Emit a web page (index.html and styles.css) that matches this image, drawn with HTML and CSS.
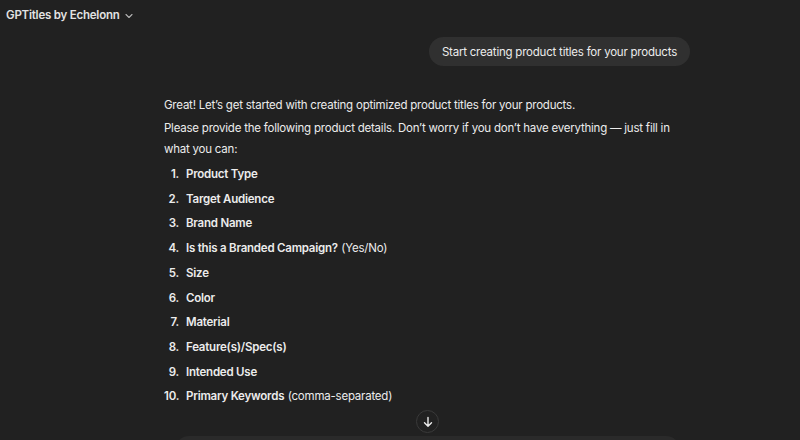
FILE: index.html
```html
<!DOCTYPE html>
<html>
<head>
<meta charset="utf-8">
<link rel="stylesheet" href="styles.css">
</head>
<body>
<div class="app">
  <header class="topbar">
    <span class="title">GPTitles by Echelonn</span>
    <svg class="chev" width="10" height="10" viewBox="0 0 10 10"><path d="M2 3.5 L5 6.5 L8 3.5" fill="none" stroke="#b4b4b4" stroke-width="1.1" stroke-linecap="round" stroke-linejoin="round"/></svg>
  </header>
  <main class="thread">
    <div class="user-row">
      <div class="bubble">Start creating product titles for your products</div>
    </div>
    <div class="assistant">
      <p class="p1">Great! Let’s get started with creating optimized product titles for your products.</p>
      <p class="p2">Please provide the following product details. Don’t worry if you don’t have everything — just fill in what you can:</p>
      <ol class="list">
        <li><b>Product Type</b></li>
        <li><b>Target Audience</b></li>
        <li><b>Brand Name</b></li>
        <li><b>Is this a Branded Campaign?</b> (Yes/No)</li>
        <li><b>Size</b></li>
        <li><b>Color</b></li>
        <li><b>Material</b></li>
        <li><b>Feature(s)/Spec(s)</b></li>
        <li><b>Intended Use</b></li>
        <li><b>Primary Keywords</b> (comma-separated)</li>
      </ol>
    </div>
  </main>
  <div class="scroll-btn">
    <svg width="12" height="12" viewBox="0 0 12 12"><path d="M6 1.5 V10 M2.5 6.8 L6 10.2 L9.5 6.8" fill="none" stroke="#ececec" stroke-width="1.4" stroke-linecap="round" stroke-linejoin="round"/></svg>
  </div>
  <div class="composer"></div>
</div>
</body>
</html>
```
FILE: styles.css
```css
html, body {
  margin: 0;
  padding: 0;
  background: #212121;
  height: 100%;
  overflow: hidden;
}
.app {
  position: relative;
  width: 800px;
  height: 440px;
  font-family: Inter, "Noto Sans", sans-serif;
  color: #ececec;
  overflow: hidden;
}
.topbar {
  height: 30px;
  display: flex;
  align-items: center;
  padding-left: 6px;
  gap: 4px;
}
.title {
  font-size: 11.5px;
  letter-spacing: -0.22px;
  font-weight: 600;
  color: #e3e3e3;
}
.chev { margin-top: 1px; }
.thread {
  width: 526px;
  margin-left: 164px;
}
.user-row {
  display: flex;
  justify-content: flex-end;
  margin-top: 7px;
}
.bubble {
  background: #303030;
  border-radius: 15px;
  height: 29px;
  padding: 0 13px;
  display: flex;
  align-items: center;
  font-size: 11.5px;
  letter-spacing: -0.22px;
  color: #ececec;
}
.assistant {
  margin-top: 29px;
  font-size: 11.5px;
  letter-spacing: -0.22px;
  line-height: 21px;
}
.assistant p { margin: 0; }
.p2 { margin-top: 2px !important; width: 516px; }
.list {
  margin: 2px 0 0;
  padding: 0;
  list-style: none;
  counter-reset: item;
}
.list li {
  line-height: 24.7px;
  display: flex;
  counter-increment: item;
}
.list li::before {
  content: counter(item) ".";
  width: 15px;
  margin-right: 7px;
  text-align: right;
  font-weight: 600;
}
.list b { font-weight: 600; margin-right: 0.3em; }
.scroll-btn {
  position: absolute;
  left: 416px;
  top: 410px;
  width: 21px;
  height: 21px;
  border: 1px solid #3a3a3a;
  border-radius: 50%;
  background: #212121;
  display: flex;
  align-items: center;
  justify-content: center;
}
.composer {
  position: absolute;
  left: 175px;
  top: 436px;
  width: 505px;
  height: 40px;
  background: #2a2a2a;
  border-radius: 14px 14px 0 0;
}
```
